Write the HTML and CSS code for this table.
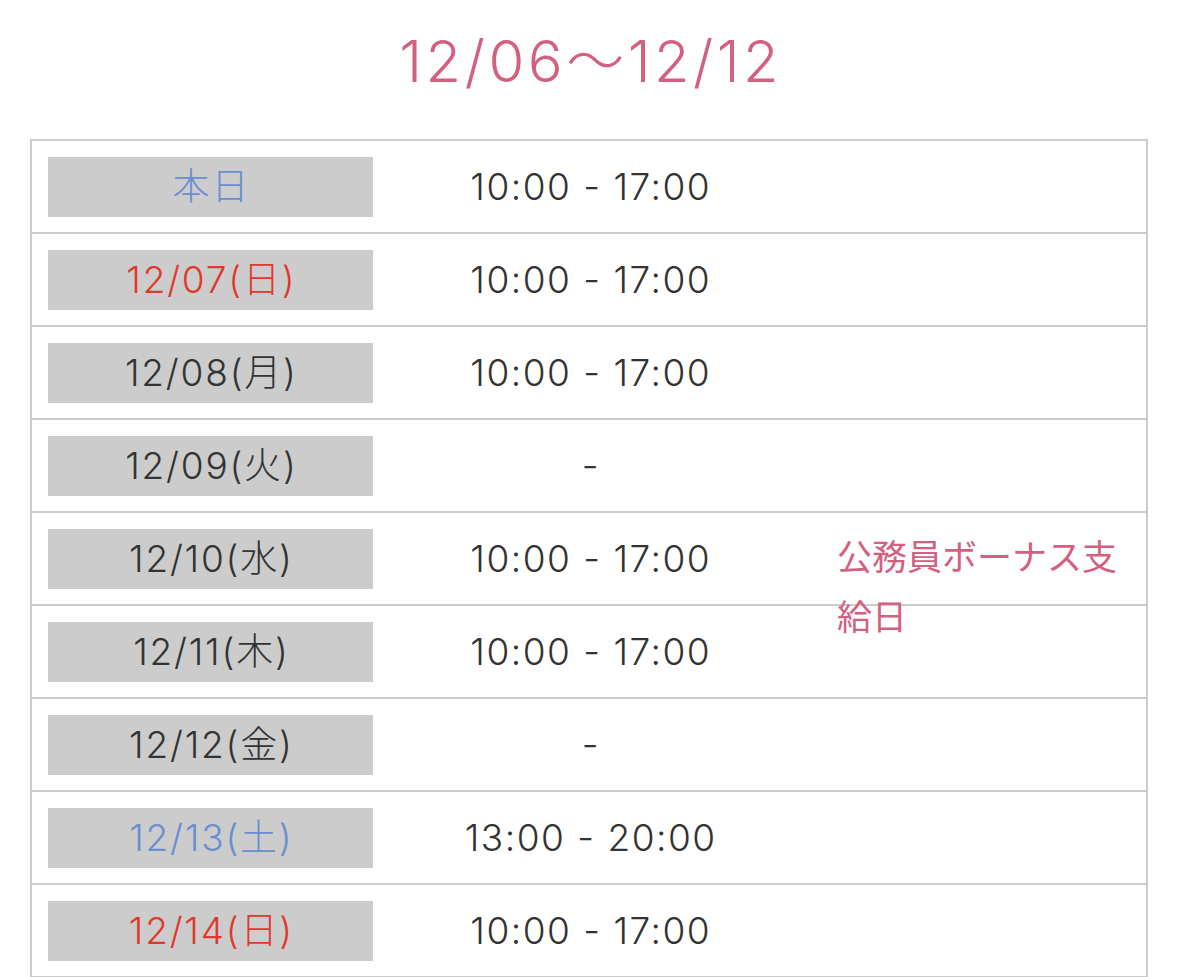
FILE: index.html
```html
<!DOCTYPE html>
<html lang="ja">
<head>
<meta charset="utf-8">
<title>営業時間</title>
<link rel="stylesheet" href="styles.css">
</head>
<body>
<div class="page">
  <h2 class="title">12/06〜12/12</h2>
  <div class="schedule">
    <div class="row">
      <div class="day today">本日</div>
      <div class="time">10:00 - 17:00</div>
      <div class="note"></div>
    </div>
    <div class="row">
      <div class="day sun">12/07(日)</div>
      <div class="time">10:00 - 17:00</div>
      <div class="note"></div>
    </div>
    <div class="row">
      <div class="day">12/08(月)</div>
      <div class="time">10:00 - 17:00</div>
      <div class="note"></div>
    </div>
    <div class="row">
      <div class="day">12/09(火)</div>
      <div class="time">-</div>
      <div class="note"></div>
    </div>
    <div class="row">
      <div class="day">12/10(水)</div>
      <div class="time">10:00 - 17:00</div>
      <div class="note">公務員ボーナス支給日</div>
    </div>
    <div class="row">
      <div class="day">12/11(木)</div>
      <div class="time">10:00 - 17:00</div>
      <div class="note"></div>
    </div>
    <div class="row">
      <div class="day">12/12(金)</div>
      <div class="time">-</div>
      <div class="note"></div>
    </div>
    <div class="row">
      <div class="day sat">12/13(土)</div>
      <div class="time">13:00 - 20:00</div>
      <div class="note"></div>
    </div>
    <div class="row">
      <div class="day sun">12/14(日)</div>
      <div class="time">10:00 - 17:00</div>
      <div class="note"></div>
    </div>
  </div>
</div>
</body>
</html>
```
FILE: styles.css
```css
html, body {
  margin: 0;
  padding: 0;
  background: #ffffff;
}

body {
  font-family: Inter, "Noto Sans CJK JP", sans-serif;
  font-weight: 300;
  color: #333333;
}

.page {
  padding: 0 31px 0 30px;
}

.title {
  margin: 0;
  padding-top: 25px;
  height: 139px;
  box-sizing: border-box;
  font-size: 58px;
  line-height: 72px;
  font-weight: 300;
  letter-spacing: 3.5px;
  text-indent: 3.5px;
  text-align: center;
  color: #d4607f;
}

.schedule {
  border: 2px solid #cccccc;
  border-bottom: none;
}

.row {
  display: grid;
  grid-template-columns: 325px 434px 1fr;
  grid-template-rows: 60px;
  padding: 16px 0 15px 16px;
  border-bottom: 2px solid #cccccc;
  font-size: 37px;
  line-height: 60px;
}

.day {
  background: #cccccc;
  text-align: center;
  letter-spacing: 1.8px;
  text-indent: 1.8px;
  color: #333333;
}

.day.today,
.day.sat {
  color: #6a8fd0;
}

.day.sun {
  color: #e0392b;
}

.time {
  text-align: center;
  letter-spacing: 1.5px;
  text-indent: 1.5px;
  color: #333333;
}

.note {
  margin-top: -4px;
  padding-left: 30px;
  height: 60px;
  font-family: "Noto Sans CJK JP", sans-serif;
  font-weight: 400;
  font-size: 35px;
  color: #d4607f;
}
```
